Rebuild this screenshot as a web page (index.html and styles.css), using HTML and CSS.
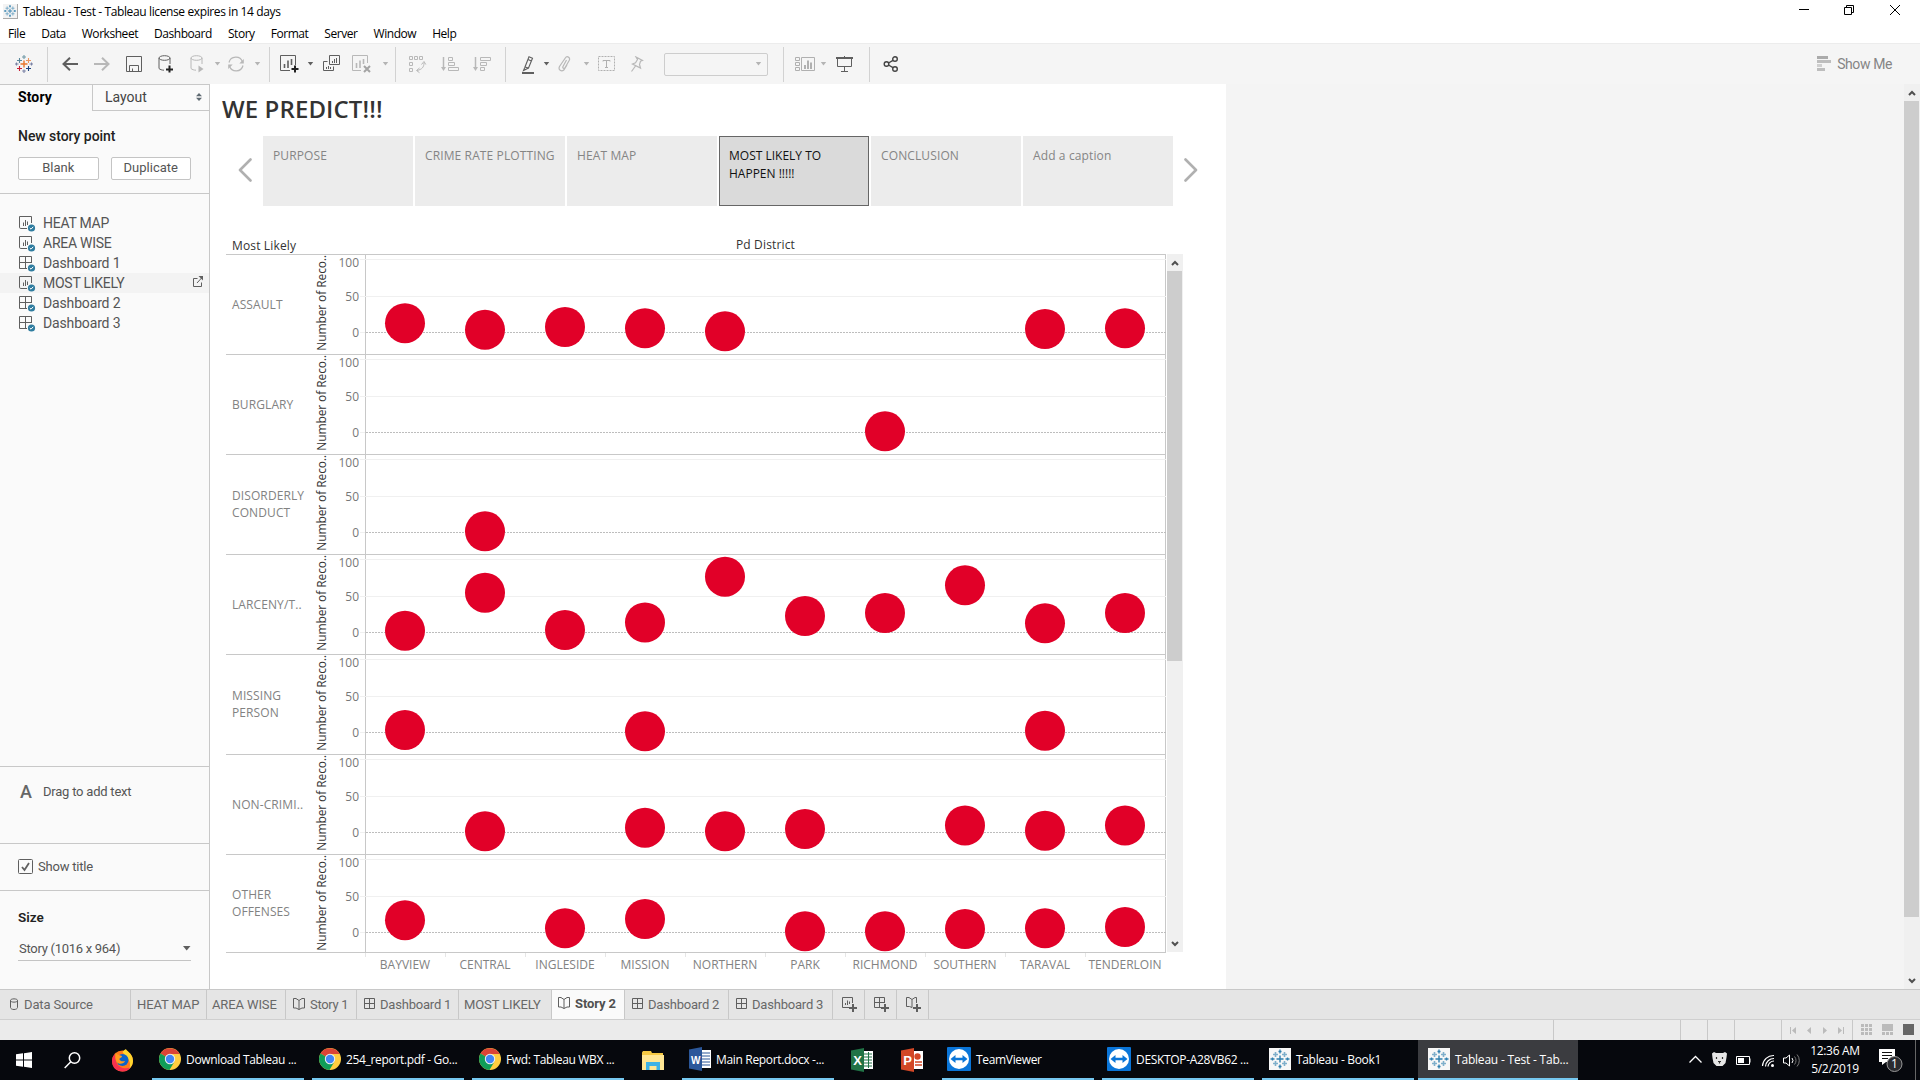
FILE: index.html
```html
<!DOCTYPE html>
<html lang="en">
<head>
<meta charset="utf-8">
<title>Tableau - Test</title>
<link rel="stylesheet" href="styles.css">
</head>
<body>
<svg class="defs" aria-hidden="true">
  <symbol id="logo" viewBox="0 0 18 18"><g fill="none" stroke-width="1.1"><path stroke="#e8762c" stroke-width="1.4" d="M9 5.500v7M5.500 9h7"/><path stroke="#59879b" d="M4.500 3v5M2 5.500h5"/><path stroke="#e8762c" d="M13.500 3v5M11 5.500h5" stroke-opacity=".75"/><path stroke="#c72035" d="M4.500 11v5M2 13.500h5"/><path stroke="#1f447e" d="M13.500 11v5M11 13.500h5"/><path stroke="#7199a6" d="M9 0v4M7 2h4"/><path stroke="#5b6591" stroke-opacity=".8" d="M9 14.500v3.500M7.200 16h3.600M0 9h3.500M1.500 7.500v3M14.500 9h3.500M16.500 7.500v3"/></g></symbol>
  <symbol id="logo-blue" viewBox="0 0 22 22"><g fill="none" stroke="#2f7fae"><path stroke-width="1.400" d="M11 7.500v7M7.500 11h7"/><path stroke-opacity=".6" stroke-width="1.600" d="M6.500 4v5M4 6.500h5M15.500 4v5M13 6.500h5M6.500 13v5M4 15.500h5M15.500 13v5M13 15.500h5"/><path stroke-width="1.300" d="M11 1.500v4M9.500 3.500h3M11 16.500v4M9.500 18.500h3M1.500 11h4M3.500 9.500v3M16.500 11h4M18.500 9.500v3"/></g></symbol>
  <symbol id="caret" viewBox="0 0 7 4"><path fill="currentColor" d="M.8 0h5.400L3.500 3.500z"/></symbol>
  <symbol id="up" viewBox="0 0 8 6"><path d="M1 5l3-3 3 3" fill="none" stroke="#505050" stroke-width="2"/></symbol>
  <symbol id="down" viewBox="0 0 8 6"><path d="M1 1l3 3 3-3" fill="none" stroke="#505050" stroke-width="2"/></symbol>
  <symbol id="i-sheet" viewBox="0 0 17 16"><path d="M8 12.500H1.800a1.300 1.300 0 0 1-1.300-1.300V.5h12V7M4.500 6.500V10M6.500 4v6M8.500 5.500V9" fill="none" stroke="#5f5f5f"/><circle cx="12.500" cy="12" r="3.600" fill="#2f7c9f"/><path d="M10.800 12l1.200 1.200 2.200-2.400" fill="none" stroke="#fff"/></symbol>
  <symbol id="i-dash" viewBox="0 0 17 16"><path d="M8 12.500H.5V.5h12V7M.5 6.500h12M6.500.5v12" fill="none" stroke="#5f5f5f"/><circle cx="12.500" cy="12" r="3.600" fill="#2f7c9f"/><path d="M10.800 12l1.200 1.200 2.200-2.400" fill="none" stroke="#fff"/></symbol>
  <symbol id="t-dash" viewBox="0 0 11 11"><path d="M.5.5h10v10H.5zM.5 5.500h10M5.500.5v10" fill="none" stroke="#5f5f5f"/></symbol>
  <symbol id="t-story" viewBox="0 0 12 12"><path d="M.5.500L3 .5l3 2 3-2h2.500v9.500H9l-3 1.500-3-1.500H.5zM6 2.500v9" fill="none" stroke="#5f5f5f"/></symbol>
  <symbol id="chrome" viewBox="0 0 22 22"><circle cx="11" cy="11" r="11" fill="#ffcd40"/><path d="M11 11L1.500 5.500A11 11 0 0 1 20.600 6H11z" fill="#db4437"/><path d="M1.500 5.500A11 11 0 0 0 10.500 22L15.500 13.500 11 11z" fill="#0f9d58"/><circle cx="11" cy="11" r="5.200" fill="#f1f1f1"/><circle cx="11" cy="11" r="4.200" fill="#4285f4"/></symbol>
  <symbol id="teamviewer" viewBox="0 0 24 24"><rect width="24" height="24" rx="1" fill="#0a75d8"/><circle cx="12" cy="12" r="10" fill="#fff"/><path d="M3.500 12l5-4v2.800h7V8l5 4-5 4v-2.800h-7V16z" fill="#0a75d8"/></symbol>
  <symbol id="tabapp" viewBox="0 0 22 22"><rect width="22" height="22" fill="#f7f7f7"/><use href="#logo-blue"/></symbol>
  <symbol id="grid" viewBox="0 0 810 100"><path d="M0 5.500h806M0 42.500h806M0 78.500h5" stroke="#f0f0f0"/><path d="M6 78.500h800" stroke="#bdbdbd" stroke-dasharray="2 1"/></symbol>
</svg>

<header class="titlebar">
  <svg class="appicon" viewBox="0 0 22 22"><rect width="22" height="22" fill="#f3f3f3"/><use href="#logo-blue"/></svg>
  <span class="apptitle">Tableau - Test - Tableau license expires in 14 days</span>
  <svg class="winbtns" width="111" height="12" viewBox="0 0 111 12" fill="none" stroke="#000"><path d="M0 5.500h10M45.500 3.500h7v7h-7zM47.500 3V1.500h7v7h-2M91 1l10 10M101 1L91 11"/></svg>
</header>
<nav class="menubar"><span>File</span><span>Data</span><span>Worksheet</span><span>Dashboard</span><span>Story</span><span>Format</span><span>Server</span><span>Window</span><span>Help</span></nav>

<div class="toolbar">
  <div class="group g-logo"><i class="w47"><svg width="18" height="18"><use href="#logo"/></svg></i></div>
  <div class="group g-file">
    <i class="w32"><svg width="16" height="14" fill="none" stroke="#5f5f5f" stroke-width="2"><path d="M16 7H1.500M8 .8L1.500 7 8 13.200"/></svg></i>
    <i class="w32"><svg width="16" height="14" fill="none" stroke="#b8b8b8" stroke-width="2"><path d="M0 7h14.500M8 .8L14.500 7 8 13.200"/></svg></i>
    <i class="w32"><svg width="16" height="16" fill="none" stroke="#5f5f5f"><path d="M.5.5h15v15H.5zM3.500 15.500V9.500h9v6M6.500 15.500V12.500"/></svg></i>
    <i class="w32"><svg width="16" height="18" fill="none" stroke="#5f5f5f"><ellipse cx="6.500" cy="3" rx="5.500" ry="2.300"/><path d="M1 3v10.500c1 1 3 1.700 5 1.700M12 3v6"/><path d="M11.500 10.500v7M8 14.500h7" stroke="#222" stroke-width="2"/></svg></i>
    <i class="w30"><svg width="16" height="18" fill="none" stroke="#b8b8b8"><ellipse cx="7.500" cy="3" rx="5.500" ry="2.300"/><path d="M2 3v10.500c1 1 3 1.700 5 1.700M13 3v6"/><path d="M9.500 10.500v7l5-3.500z" fill="#b8b8b8" stroke="none"/></svg></i>
    <i class="w10 off"><svg width="7" height="4"><use href="#caret"/></svg></i>
    <i class="w28"><svg width="18" height="16" fill="none" stroke="#b8b8b8" stroke-width="1.200"><path d="M2 6.500A7 7 0 0 1 15.500 6M16 9.500A7 7 0 0 1 2.500 10"/><path d="M16.800 3v4.500h-4.500zM1.200 13V8.500h4.500z" fill="#b8b8b8" stroke="none"/></svg></i>
    <i class="w14 off"><svg width="7" height="4"><use href="#caret"/></svg></i>
  </div>
  <div class="group g-sheet">
    <i class="w28"><svg width="20" height="18" fill="none" stroke="#5f5f5f"><path d="M10 15.500H.5V.5h15V10"/><path d="M4.500 9v4M8 5.500V13M11.500 4v6" stroke-width="1.600"/><path d="M15 10.500v7M11.500 14h7" stroke="#222" stroke-width="2"/></svg></i>
    <i class="w12 on"><svg width="7" height="4"><use href="#caret"/></svg></i>
    <i class="w32 raise"><svg width="18" height="16" fill="none" stroke="#5f5f5f"><path d="M6.500.5h10v9h-10zM4.500 6.500h-4v9h10v-4M9.500 8V6M11.500 8V4M13.500 8V3M3.500 14v-2M5.500 14v-3M7.500 14v-2"/></svg></i>
    <i class="w28"><svg width="20" height="18" fill="none" stroke="#b8b8b8"><path d="M9 15.500H.5V.5h15V8"/><path d="M4.500 8v5M8 5.500V13M11.500 4v5" stroke-width="1.600"/><path d="M12 11l6 6M18 11l-6 6" stroke="#a4a4a4" stroke-width="2"/></svg></i>
    <i class="w18 off"><svg width="7" height="4"><use href="#caret"/></svg></i>
  </div>
  <div class="group g-sort">
    <i class="w32"><svg width="18" height="16" overflow="visible" fill="none" stroke="#b8b8b8"><path d="M.5.500h3v3h-3zM5.500.5h3v3h-3zM10.500.5h3v3h-3zM.5 6.500h3v3h-3zM.5 12.500h3v3h-3zM15 7c0 4-2 6.500-7 7.500M10.500 12L7.500 14.500l3 2.200M12.500 8.500L15 5.500l1.800 3"/></svg></i>
    <i class="w32"><svg width="18" height="14" fill="none" stroke="#b8b8b8"><path d="M2.500 0v12" stroke-width="1.500"/><path d="M0 10h5l-2.500 4z" fill="#b8b8b8" stroke="none"/><path d="M7.500.5h4v3h-4zM7.500 5.500h6v3h-6zM7.500 10.500h10v3h-10z"/></svg></i>
    <i class="w32"><svg width="18" height="14" fill="none" stroke="#b8b8b8"><path d="M2.500 0v12" stroke-width="1.500"/><path d="M0 10h5l-2.500 4z" fill="#b8b8b8" stroke="none"/><path d="M7.500.5h10v3h-10zM7.500 5.500h6v3h-6zM7.500 10.500h4v3h-4z"/></svg></i>
  </div>
  <div class="group g-format">
    <i class="w28 lower"><svg width="12" height="18" fill="none" stroke="#5f5f5f"><path d="M7 .8l3.500 1.500L6.500 12 3 11zM3 11l-1.500 3.500L6.500 12M6 3.500L9.500 5" stroke-width="1.100"/><path d="M0 17h12" stroke-width="2"/></svg></i>
    <i class="w8 on"><svg width="7" height="4"><use href="#caret"/></svg></i>
    <i class="w30"><svg width="14" height="16" fill="none" stroke="#b8b8b8" stroke-width="1.200"><path d="M8.500 4L5 10.500c-.8 1.800 1.200 2.700 2 1.200l4.300-7.500c1.200-2.700-2.300-4.800-4-2.200L1.500 10.500c-1.600 3.500 2 5.500 4.300 3.500L9 9"/></svg></i>
    <i class="w12 off"><svg width="7" height="4"><use href="#caret"/></svg></i>
    <i class="w30"><svg width="18" height="16" fill="none" stroke="#b0b0b0"><path d="M.5.5h16v14H.5z" stroke-dasharray="2 1"/><path d="M5 5.500V4.500h7v1M8.500 4.500v7M7 11.500h3"/></svg></i>
    <i class="w30"><svg width="14" height="16" fill="none" stroke="#b8b8b8" stroke-width="1.200"><path d="M6 1l6.500 3.500-2 .8-1 3.200 1 3.500L2.500 8l3-1.200L7.500 3.500zM5.500 10L1.500 15.500"/></svg></i>
    <span class="combo off"><svg width="7" height="4"><use href="#caret"/></svg></span>
  </div>
  <div class="group g-view">
    <i class="w28"><svg width="20" height="14" fill="none" stroke="#b0b0b0"><path d="M.5.5h4v3h-4zM.5 5.500h4v3h-4zM.5 10.500h4v3h-4zM6.500.5h13v13h-13z"/><path d="M10 8v4M13 3.500V12M16 5.500V12" stroke-width="2"/></svg></i>
    <i class="w8 off"><svg width="7" height="4"><use href="#caret"/></svg></i>
    <i class="w36"><svg width="18" height="16" fill="none" stroke="#5f5f5f"><path d="M0 2h17" stroke-width="2"/><path d="M1.500 2v8.500h14V2M8.500 0v2M8.500 10.500v5M5 15.500h7"/></svg></i>
  </div>
  <div class="group g-share">
    <i class="w32"><svg width="16" height="16" fill="none" stroke="#444" stroke-width="1.400"><circle cx="3.500" cy="8" r="2.300"/><circle cx="12" cy="3" r="2.300"/><circle cx="12" cy="13" r="2.300"/><path d="M5.500 7L10 4.300M5.500 9l4.500 2.700"/></svg></i>
  </div>
  <div class="showme"><svg width="14" height="15"><path d="M0 0h11v3H0z" fill="#ababab"/><path d="M0 4h14v3H0zM0 12h8v3H0z" fill="#bdbdbd"/><path d="M0 8h5v3H0z" fill="#cfcfcf"/></svg><span>Show Me</span></div>
</div>

<main class="work">
  <aside class="side">
    <div class="sidetabs"><b>Story</b><span class="layout">Layout<svg width="6" height="8"><path d="M0 3.300h6L3 0zM0 4.700h6L3 8z" fill="#5f6a72"/></svg></span></div>
    <section class="newpoint">
      <h2>New story point</h2>
      <div class="btns"><button>Blank</button><button>Duplicate</button></div>
    </section>
    <ul class="sheets">
      <li><svg><use href="#i-sheet"/></svg><span class="caps">HEAT MAP</span></li>
      <li><svg><use href="#i-sheet"/></svg><span class="caps">AREA WISE</span></li>
      <li><svg><use href="#i-dash"/></svg><span>Dashboard 1</span></li>
      <li class="hover"><svg><use href="#i-sheet"/></svg><span class="caps">MOST LIKELY</span><svg class="ext" viewBox="0 0 10 11" fill="none" stroke="#5f5f5f"><path d="M4.500 2.500h-4v8h8v-4M4 7l5-5.500"/><path d="M5.500 0H10v4.500z" fill="#5f5f5f" stroke="none"/></svg></li>
      <li><svg><use href="#i-dash"/></svg><span>Dashboard 2</span></li>
      <li><svg><use href="#i-dash"/></svg><span>Dashboard 3</span></li>
    </ul>
    <section class="dragtext"><b>A</b><span>Drag to add text</span></section>
    <section class="showtitle"><svg width="15" height="15" fill="none" stroke="#5f5f5f"><rect x=".5" y=".5" width="14" height="14" rx="1"/><path d="M4 8l2.500 3L11 4" stroke-width="1.800"/></svg><span>Show title</span></section>
    <section class="size"><h2>Size</h2><div class="select"><span>Story (1016 x 964)</span><svg width="8" height="5"><path d="M0 0h7.500L3.700 4.500z" fill="#5f5f5f"/></svg></div></section>
  </aside>

  <article class="story">
    <h1>WE PREDICT!!!</h1>
    <div class="points">
      <svg class="arrow" width="14" height="24"><path d="M12.500 1.500L2 12l10.500 10.500"/></svg>
      <div class="point">PURPOSE</div><div class="point">CRIME RATE PLOTTING</div><div class="point">HEAT MAP</div><div class="point current">MOST LIKELY TO HAPPEN !!!!!</div><div class="point">CONCLUSION</div><div class="point">Add a caption</div>
      <svg class="arrow next" width="14" height="24"><path d="M1.500 1.500L12 12 1.500 22.500"/></svg>
    </div>
    <div class="viz">
      <div class="chart">
        <div class="heads"><span>Most Likely</span><span class="pd">Pd District</span></div>
        <div class="row"><div class="lab">ASSAULT</div><div class="ax"><span>Number of Reco..</span></div><div class="plot"><svg viewBox="0 1 801 99"><use href="#grid" x="-5" width="810" height="100"/><text x="-6" y="13">100</text><text x="-6" y="47">50</text><text x="-6" y="83">0</text><circle cx="40" cy="69.200" r="20"/><circle cx="120" cy="75.800" r="20"/><circle cx="200" cy="73" r="20"/><circle cx="280" cy="74.300" r="20"/><circle cx="360" cy="77.300" r="20"/><circle cx="680" cy="75" r="20"/><circle cx="760" cy="74.300" r="20"/></svg></div></div>
        <div class="row"><div class="lab">BURGLARY</div><div class="ax"><span>Number of Reco..</span></div><div class="plot"><svg viewBox="0 1 801 99"><use href="#grid" x="-5" width="810" height="100"/><text x="-6" y="13">100</text><text x="-6" y="47">50</text><text x="-6" y="83">0</text><circle cx="520" cy="77.300" r="20"/></svg></div></div>
        <div class="row"><div class="lab">DISORDERLY CONDUCT</div><div class="ax"><span>Number of Reco..</span></div><div class="plot"><svg viewBox="0 1 801 99"><use href="#grid" x="-5" width="810" height="100"/><text x="-6" y="13">100</text><text x="-6" y="47">50</text><text x="-6" y="83">0</text><circle cx="120" cy="77.300" r="20"/></svg></div></div>
        <div class="row"><div class="lab">LARCENY/T..</div><div class="ax"><span>Number of Reco..</span></div><div class="plot"><svg viewBox="0 1 801 99"><use href="#grid" x="-5" width="810" height="100"/><text x="-6" y="13">100</text><text x="-6" y="47">50</text><text x="-6" y="83">0</text><circle cx="40" cy="76.700" r="20"/><circle cx="120" cy="38.700" r="20"/><circle cx="200" cy="76" r="20"/><circle cx="280" cy="68.500" r="20"/><circle cx="360" cy="22.700" r="20"/><circle cx="440" cy="62" r="20"/><circle cx="520" cy="59" r="20"/><circle cx="600" cy="31.300" r="20"/><circle cx="680" cy="69.300" r="20"/><circle cx="760" cy="59" r="20"/></svg></div></div>
        <div class="row"><div class="lab">MISSING PERSON</div><div class="ax"><span>Number of Reco..</span></div><div class="plot"><svg viewBox="0 1 801 99"><use href="#grid" x="-5" width="810" height="100"/><text x="-6" y="13">100</text><text x="-6" y="47">50</text><text x="-6" y="83">0</text><circle cx="40" cy="76" r="20"/><circle cx="280" cy="77.300" r="20"/><circle cx="680" cy="76.700" r="20"/></svg></div></div>
        <div class="row"><div class="lab">NON-CRIMI..</div><div class="ax"><span>Number of Reco..</span></div><div class="plot"><svg viewBox="0 1 801 99"><use href="#grid" x="-5" width="810" height="100"/><text x="-6" y="13">100</text><text x="-6" y="47">50</text><text x="-6" y="83">0</text><circle cx="120" cy="77.300" r="20"/><circle cx="280" cy="73.700" r="20"/><circle cx="360" cy="77.300" r="20"/><circle cx="440" cy="75" r="20"/><circle cx="600" cy="71.500" r="20"/><circle cx="680" cy="76.700" r="20"/><circle cx="760" cy="71.500" r="20"/></svg></div></div>
        <div class="row last"><div class="lab">OTHER OFFENSES</div><div class="ax"><span>Number of Reco..</span></div><div class="plot"><svg viewBox="0 1 801 99"><use href="#grid" x="-5" width="810" height="100"/><text x="-6" y="13">100</text><text x="-6" y="47">50</text><text x="-6" y="83">0</text><circle cx="40" cy="66.200" r="20"/><circle cx="200" cy="74.300" r="20"/><circle cx="280" cy="65" r="20"/><circle cx="440" cy="77.300" r="20"/><circle cx="520" cy="77.300" r="20"/><circle cx="600" cy="75" r="20"/><circle cx="680" cy="74.300" r="20"/><circle cx="760" cy="73" r="20"/></svg></div></div>
        <div class="cols"><span>BAYVIEW</span><span>CENTRAL</span><span>INGLESIDE</span><span>MISSION</span><span>NORTHERN</span><span>PARK</span><span>RICHMOND</span><span>SOUTHERN</span><span>TARAVAL</span><span>TENDERLOIN</span></div>
      </div>
      <div class="scroll inner"><svg width="8" height="6"><use href="#up"/></svg><div class="thumb"></div><svg class="dn" width="8" height="6"><use href="#down"/></svg></div>
    </div>
  </article>
  <div class="scroll outer"><svg width="8" height="6"><use href="#up"/></svg><div class="thumb"></div><svg class="dn" width="8" height="6"><use href="#down"/></svg></div>
</main>

<div class="tabs">
  <div class="tab t-ds"><svg width="8" height="12" fill="none" stroke="#5f5f5f"><path d="M.5 2.500v7c0 1 1.500 2 3.500 2s3.500-1 3.500-2v-7M.5 2.500c0 2.200 7 2.200 7 0S.5.300.5 2.500z"/></svg><span>Data Source</span></div>
  <div class="tab t-heat">HEAT MAP</div>
  <div class="tab t-area">AREA WISE</div>
  <div class="tab t-s1"><svg width="12" height="12"><use href="#t-story"/></svg><span>Story 1</span></div>
  <div class="tab t-d1"><svg width="11" height="11"><use href="#t-dash"/></svg><span>Dashboard 1</span></div>
  <div class="tab t-most">MOST LIKELY</div>
  <div class="tab t-s2"><svg width="12" height="12"><use href="#t-story"/></svg><b>Story 2</b></div>
  <div class="tab t-d2"><svg width="11" height="11"><use href="#t-dash"/></svg><span>Dashboard 2</span></div>
  <div class="tab t-d2"><svg width="11" height="11"><use href="#t-dash"/></svg><span>Dashboard 3</span></div>
  <div class="tab t-new"><svg width="15" height="15" fill="none" stroke="#5f5f5f"><path d="M7 10.500H.5V.5h10V6M3.500 8V6M5.500 8V3.500M7.500 7V4.500"/><path d="M11 7v8M7 11h8" stroke-width="2"/></svg></div>
  <div class="tab t-new"><svg width="15" height="15" fill="none" stroke="#5f5f5f"><path d="M7 10.500H.5V.5h10V6M.5 5.500h10M5.500.5v10"/><path d="M11 7v8M7 11h8" stroke-width="2"/></svg></div>
  <div class="tab t-new"><svg width="15" height="15" fill="none" stroke="#5f5f5f"><path d="M6 10.500L3.500 9.500h-3V.5H3l3 2 3-2h1.500V6M6 2.500v8"/><path d="M11 7v8M7 11h8" stroke-width="2"/></svg></div>
</div>
<footer class="status">
  <span class="c1"></span><span class="c2"></span><span class="c3"></span><span class="c3"></span><span class="c4"></span>
  <span class="c5"><svg width="55" height="9" fill="#bbb"><path d="M0 1h1v7H0zM6 1v7L2 4.500zM21 1v7l-4-3.500zM33 1v7l4-3.500zM48 1v7l4-3.500zM53 1h1v7h-1z"/></svg></span>
  <span class="c6"><svg width="11" height="11" fill="#bbb"><path d="M0 0h3v3H0zM4 0h3v3H4zM8 0h3v3H8zM0 4h3v3H0zM4 4h3v3H4zM8 4h3v3H8zM0 8h3v3H0zM4 8h3v3H4zM8 8h3v3H8z"/></svg><svg width="11" height="11" fill="#bbb"><path d="M0 0h11v7H0zM0 8h3v3H0zM4 8h3v3H4zM8 8h3v3H8z"/></svg><svg width="11" height="11"><path d="M0 0h11v11H0z" fill="#666"/></svg></span>
</footer>

<div class="taskbar">
  <div class="tb48"><svg width="16" height="16" fill="#fff"><path d="M0 2.300L7 1.300V7.500H0zM8 1.200L16 0v7.500H8zM0 8.500h7v6.200L0 13.700zM8 8.500h8V16l-8-1.200z"/></svg></div>
  <div class="tb48"><svg width="17" height="17" fill="none" stroke="#fff" stroke-width="1.500"><circle cx="10.500" cy="6" r="5.200"/><path d="M6.800 9.800L.7 16"/></svg></div>
  <div class="tb52"><svg width="23" height="23" viewBox="0 0 23 23"><circle cx="11.500" cy="12" r="10.500" fill="#ff7a1a"/><path d="M11.500 3C13 1 14 .5 15 0c0 2 7 4 7 12a10.500 10.500 0 0 1-4 8c2-4 1-9-2-11z" fill="#ffd52e"/><path d="M1 12c0 7 5 10.500 10.500 10.500 4 0 7-2 8-4-6 2-12 0-14-5L4 5C2 7 1 9 1 12z" fill="#f9314e"/><circle cx="11.500" cy="11" r="6" fill="#0b63c9"/><path d="M5 3c0 2 1 2.500 3 3l3 1c0 2-3 2-2.500 3.500 1 2 3.500 2 5.500 1.500-1 3-6 4-8.500 1C4 10 4 7 5 3z" fill="#ff9b1c"/></svg></div>
  <div class="task"><svg class="ic22"><use href="#chrome"/></svg><span>Download Tableau ...</span></div>
  <div class="task"><svg class="ic22"><use href="#chrome"/></svg><span>254_report.pdf - Go...</span></div>
  <div class="task"><svg class="ic22"><use href="#chrome"/></svg><span>Fwd: Tableau WBX ...</span></div>
  <div class="tb50"><svg width="22" height="19"><path d="M0 1.500L1 0h8l1 2h11v17H0z" fill="#f5c944"/><path d="M0 4h22v15H0z" fill="#ffe694"/><path d="M4 19v-8h14v8h-3.500v-4h-7v4z" fill="#3db2e6"/></svg></div>
  <div class="task"><svg class="ic22" viewBox="0 0 22 24"><path d="M12 3h10v18H12z" fill="#fff"/><path d="M13 6h8M13 9h8M13 12h8M13 15h8M13 18h8" stroke="#2b579a"/><path d="M0 2.500L13 0v24L0 21.500z" fill="#2b579a"/><text x="6.500" y="16.500" class="ms">W</text></svg><span>Main Report.docx -...</span></div>
  <div class="tb50 office"><svg width="22" height="24"><path d="M12 3h10v18H12z" fill="#fff"/><path d="M13 6h8M13 9h8M13 12h8M13 15h8M13 18h8M17.500 4v16" stroke="#217346"/><path d="M0 2.500L13 0v24L0 21.500z" fill="#217346"/><text x="6.500" y="16.500" class="ms big">X</text></svg></div>
  <div class="tb50 office"><svg width="22" height="24"><path d="M12 3h10v18H12z" fill="#fff"/><path d="M14 14h7M14 17h7" stroke="#d24726" stroke-width="1.500"/><circle cx="16.500" cy="8.500" r="3.200" fill="#d24726"/><path d="M0 2.500L13 0v24L0 21.500z" fill="#d24726"/><text x="6.500" y="16.500" class="ms big">P</text></svg></div>
  <div class="task tv"><svg class="ic24"><use href="#teamviewer"/></svg><span>TeamViewer</span></div>
  <div class="task tv"><svg class="ic24"><use href="#teamviewer"/></svg><span>DESKTOP-A28VB62 ...</span></div>
  <div class="task"><svg class="ic22"><use href="#tabapp"/></svg><span>Tableau - Book1</span></div>
  <div class="task open"><svg class="ic22"><use href="#tabapp"/></svg><span>Tableau - Test - Tab...</span></div>
  <div class="tray">
    <svg width="112" height="20" fill="none" stroke="#fff"><path d="M.5 12.500L6.500 6.500l6 6" stroke-width="1.300"/><path d="M23 3.500l2-1.500 2 1h7l2-1 2 1.500-.5 4-1 5.500-3 3h-6l-3-3L23.500 8z" fill="#e6e6e6" stroke="none"/><path d="M27.500 7v2M33.500 7v2M29 11.500h3M30.500 11.500v2" stroke="#333" stroke-width="1.200"/><path d="M47.500 6.500h13v8h-13zM61 8.500v4"/><path d="M49 8h6v5h-6z" fill="#fff" stroke="none"/><path d="M73.500 16A11 11 0 0 1 85 5.500M76.500 16.500A8.500 8.500 0 0 1 85 8.500M79 16.500a6 6 0 0 1 6-5.500" stroke-width="1.200"/><circle cx="83.500" cy="15.500" r="1.500" fill="#fff" stroke="none"/><path d="M94.500 8h2.500l3.500-3v11L97 13h-2.500zM103 8a4 4 0 0 1 0 5"/><path d="M105.500 6.500a6 6 0 0 1 0 8M108 4.500a9 9 0 0 1 0 12" stroke="#777"/></svg>
    <div class="clock"><span>12:36 AM</span><span>5/2/2019</span></div>
    <svg class="notif" width="26" height="26"><path d="M0 1h16v13H7l-4 3v-3H0z" fill="#fff"/><path d="M3 4.500h10M3 7.500h10M3 10.500h6" stroke="#111"/><circle cx="15.500" cy="16" r="7.500" fill="#2a2b2f" stroke="#999"/><text x="15.500" y="20" class="num">1</text></svg>
  </div>
</div>
</body>
</html>
```
FILE: styles.css
```css
* { box-sizing: border-box; }
body { margin: 0; width: 1920px; height: 1080px; overflow: hidden; display: flex; flex-direction: column; background: #fff; font-family: "Open Sans", "Noto Sans", sans-serif; font-size: 12px; color: #000; }
h1, h2, ul, button { margin: 0; padding: 0; font: inherit; }
svg { display: block; flex: none; }
span, b { white-space: nowrap; }
.defs { width: 0; height: 0; position: absolute; }

.titlebar { height: 22px; flex: none; display: flex; align-items: center; padding-left: 3px; }
.appicon { width: 15px; height: 15px; border-right: 1px solid #aaa; border-bottom: 1px solid #aaa; }
.apptitle { margin-left: 5px; padding-top: 1px; letter-spacing: -.38px; }
.winbtns { margin: 0 10px 2px auto; }
.menubar { height: 21px; flex: none; display: flex; align-items: center; gap: 16px; padding: 1px 0 0 8px; letter-spacing: -.45px; }

.toolbar { height: 41px; flex: none; display: flex; background: #f5f5f5; border-top: 1px solid #ececec; padding-top: 3px; }
.group { display: flex; height: 35px; align-items: center; border-right: 1px solid #d2d2d2; }
.group i { display: flex; justify-content: center; align-items: center; height: 34px; margin-bottom: 1px; }
.w47 { width: 47px; } .w36 { width: 36px; } .w32 { width: 32px; } .w30 { width: 30px; } .w28 { width: 28px; } .w18 { width: 18px; } .w14 { width: 14px; } .w12 { width: 12px; } .w10 { width: 10px; } .w8 { width: 8px; }
.group .raise { padding-bottom: 2px; }
.group .lower { padding-top: 2px; }
.g-file { padding: 0 5px 0 6px; }
.g-sheet { padding: 0 1px 0 6px; }
.g-sort { padding: 0 7px 0 6px; }
.g-format { padding: 0 15px 0 8px; }
.g-view { padding: 0 6px 0 7px; }
.g-share { padding-left: 5px; border: 0; }
.on { color: #5f5f5f; } .off { color: #b4b4b4; }
.combo { width: 104px; height: 23px; margin: 0 0 1px 12px; border: 1px solid #cdcdcd; border-radius: 2px; display: flex; align-items: center; justify-content: flex-end; padding-right: 5px; }
.showme { margin-left: auto; padding: 0 28px 4px 0; display: flex; align-items: center; gap: 6px; font-family: Roboto, sans-serif; font-size: 14px; letter-spacing: -.4px; color: #858585; }

.work { height: 905px; flex: none; display: flex; background: #f4f4f4; }
.side { width: 210px; background: #fafafa; border-right: 1px solid #c8c8c8; border-top: 1px solid #c8c8c8; display: flex; flex-direction: column; font-family: Roboto, sans-serif; font-size: 13px; color: #555; }
.sidetabs { display: flex; height: 26px; font-size: 14px; line-height: 25px; }
.sidetabs b { width: 92px; padding-left: 18px; color: #000; letter-spacing: .1px; }
.layout { flex: 1; border-left: 1px solid #c8c8c8; border-bottom: 1px solid #c8c8c8; display: flex; justify-content: space-between; align-items: center; padding: 0 7px 0 12px; color: #444; }
.layout svg { margin-bottom: 1px; }
.side h2 { font-weight: 500; color: #222; font-size: 14px; }
.newpoint { height: 83px; padding: 16px 18px 0; border-bottom: 1px solid #c8c8c8; }
.newpoint h2 { line-height: 18px; letter-spacing: -.05px; }
.btns { display: flex; gap: 12px; margin-top: 12px; }
button { width: 81px; height: 23px; background: #fff; border: 1px solid #c4c4c4; border-radius: 2px; color: #555; padding-bottom: 2px; }
.sheets { list-style: none; padding-top: 19px; flex: 1; font-size: 14px; }
.sheets li { height: 20px; display: flex; align-items: center; padding: 0 6px 0 19px; gap: 7px; }
.sheets li > span { letter-spacing: -.15px; }
.sheets li > .caps { letter-spacing: -.25px; }
.sheets li > svg:first-child { width: 17px; height: 16px; margin-top: 2px; }
.sheets .ext { width: 10px; height: 11px; margin: 0 0 3px auto; }
.hover { background: #f3f3f3; }
.dragtext { height: 77px; border-top: 1px solid #c8c8c8; padding: 16px 0 0 20px; display: flex; align-items: flex-start; line-height: 18px; letter-spacing: -.22px; }
.dragtext b { width: 23px; font-size: 18px; font-weight: 500; color: #666; }
.showtitle { height: 47px; border-top: 1px solid #c8c8c8; padding: 0 0 1px 18px; display: flex; align-items: center; gap: 5px; letter-spacing: -.2px; }
.size { height: 99px; border-top: 1px solid #c8c8c8; padding: 17px 18px 0; }
.size h2 { line-height: 18px; font-weight: 600; font-size: 13.500px; }
.select { display: flex; justify-content: space-between; align-items: center; height: 24px; margin-top: 11px; width: 173px; padding: 0 0 1px 1px; border-bottom: 1px solid #c4c4c4; letter-spacing: -.28px; }

.story { width: 1016px; background: #fff; padding-top: 8px; }
.story h1 { margin-left: 12px; line-height: 34px; font-size: 24px; font-weight: 600; color: #333; letter-spacing: .1px; }
.points { margin-top: 10px; display: flex; gap: 2px; align-items: center; padding-left: 28px; }
.arrow { fill: none; stroke: #b0b0b0; stroke-width: 2.600; stroke-linecap: round; stroke-linejoin: round; margin: 0 9px 2px 0; }
.next { margin: 0 0 2px 9px; }
.point { width: 150px; height: 70px; background: #ececec; padding: 11px 5px 0 10px; line-height: 18px; font-size: 12px; color: #858585; letter-spacing: .12px; }
.current { background: #dadada; border: 1px solid #666; padding: 10px 40px 0 9px; color: #111; letter-spacing: 0; }
.viz { margin-top: 30px; padding-left: 16px; display: flex; }
.chart { width: 940px; }
.heads { height: 18px; display: flex; padding-left: 6px; line-height: 20px; color: #333; letter-spacing: .15px; }
.heads span:first-child { width: 133px; }
.heads .pd { flex: 1; text-align: center; line-height: 18px; }
.row { height: 100px; display: grid; grid-template-columns: 83px 26px 30px 801px; grid-template-rows: 100%; border-top: 1px solid #c8c8c8; }
.last { height: 99px; border-bottom: 1px solid #c8c8c8; }
.lab { padding: 0 0 1px 6px; align-self: center; font-size: 12px; line-height: 17px; color: #828282; letter-spacing: .1px; }
.ax { display: flex; justify-content: center; align-items: flex-end; overflow: hidden; padding-bottom: 3px; }
.last .ax { padding-bottom: 1px; }
.ax span { writing-mode: vertical-rl; transform: rotate(180deg); color: #333; line-height: 16px; letter-spacing: -.1px; }
.plot { grid-column: 4; border-right: 1px solid #c8c8c8; border-left: 1px solid #c8c8c8; }
.plot svg { width: 801px; height: 99px; margin-left: -1px; overflow: visible; }
.plot circle { fill: #e10028; }
.plot text { text-anchor: end; fill: #777; font-size: 12px; }
.cols { display: flex; margin-left: 139px; width: 801px; }
.cols span { width: 80px; height: 24px; line-height: 24px; text-align: center; color: #828282; background: linear-gradient(#e6e6e6, #e6e6e6) 0 0 / 1px 4px no-repeat; }
.scroll { width: 16px; background: #f0f0f0; display: flex; flex-direction: column; align-items: center; }
.scroll svg { margin: 6px 0 5px; }
.scroll .thumb { width: 15px; background: #cdcdcd; align-self: flex-start; }
.scroll .dn { margin: auto 0 5px; }
.inner { margin: 18px 0 0 1px; height: 698px; }
.inner svg { position: relative; left: -.5px; }
.inner .thumb { height: 390px; }
.outer { margin-left: auto; }
.outer svg { position: relative; left: -.5px; }
.outer .thumb { height: 816px; }

.tabs { height: 30px; flex: none; display: flex; background: #e5e5e5; border-top: 1px solid #c8c8c8; font-family: Roboto, sans-serif; font-size: 13px; color: #686868; }
.tab { border-right: 1px solid #c8c8c8; display: flex; align-items: center; padding: 0 0 0 6px; white-space: nowrap; letter-spacing: -.12px; }
.tab svg { margin: 0 5px 2px 1px; }
.tab span { letter-spacing: -.2px; }
.t-ds { width: 131px; padding-left: 9px; }
.t-ds svg { margin-right: 6px; }
.t-ds span { letter-spacing: -.15px; }
.t-heat { width: 76px; }
.t-area { width: 79px; padding-left: 5px; }
.t-s1 { width: 71px; }
.t-s1 span { letter-spacing: -.3px; }
.t-d1 { width: 102px; }
.t-most { width: 93px; padding-left: 5px; }
.t-s2 { width: 73px; background: #fafafa; color: #505050; padding: 0 0 2px 5px; }
.t-s2 b { letter-spacing: -.1px; }
.t-d2 { width: 104px; padding-left: 6px; }
.t-new { width: 32px; padding-left: 8px; }
.t-new svg { margin: 0 0 0 1px; }
.status { height: 21px; flex: none; display: flex; background: #ebebeb; border-top: 1px solid #cfcfcf; }
.status > span { border-right: 1px solid #c8c8c8; display: flex; align-items: center; }
.c1 { width: 1554px; } .c2 { width: 127px; } .c3 { width: 27px; } .c4 { width: 47px; } .c5 { width: 71px; padding-left: 8px; }
.status > .c6 { border: 0; padding: 0 0 1px 8px; gap: 10px; }

.taskbar { height: 40px; flex: none; display: flex; background: #06080d; color: #fff; font-size: 12px; }
.tb48, .tb50, .tb52 { display: flex; align-items: center; justify-content: center; width: 48px; }
.tb50 { width: 50px; } .tb52 { width: 52px; }
.office { padding-right: 2px; }
.task { width: 152px; margin: 0 4px; border-bottom: 2px solid #76c8f0; display: flex; align-items: center; padding-left: 7px; gap: 5px; letter-spacing: -.33px; }
.tv { padding-left: 5px; gap: 5px; }
.ic22 { width: 22px; height: 24px; } .ic24 { width: 24px; height: 24px; }
.open { width: 160px; margin: 0; background: #3b3c40; padding-left: 10px; letter-spacing: -.2px; }
.ms { font: 700 10px "Liberation Sans", sans-serif; fill: #fff; text-anchor: middle; }
.big { font-size: 13px; }
.tray { margin-left: 111px; width: 227px; display: flex; align-items: center; border-right: 1px solid #666; }
.clock { width: 68px; display: flex; flex-direction: column; align-items: center; line-height: 17.500px; letter-spacing: -.3px; padding-bottom: 1px; }
.notif { margin: 2px 0 0 10px; }
.num { font: 12px "Open Sans", sans-serif; fill: #fff; text-anchor: middle; }
```
